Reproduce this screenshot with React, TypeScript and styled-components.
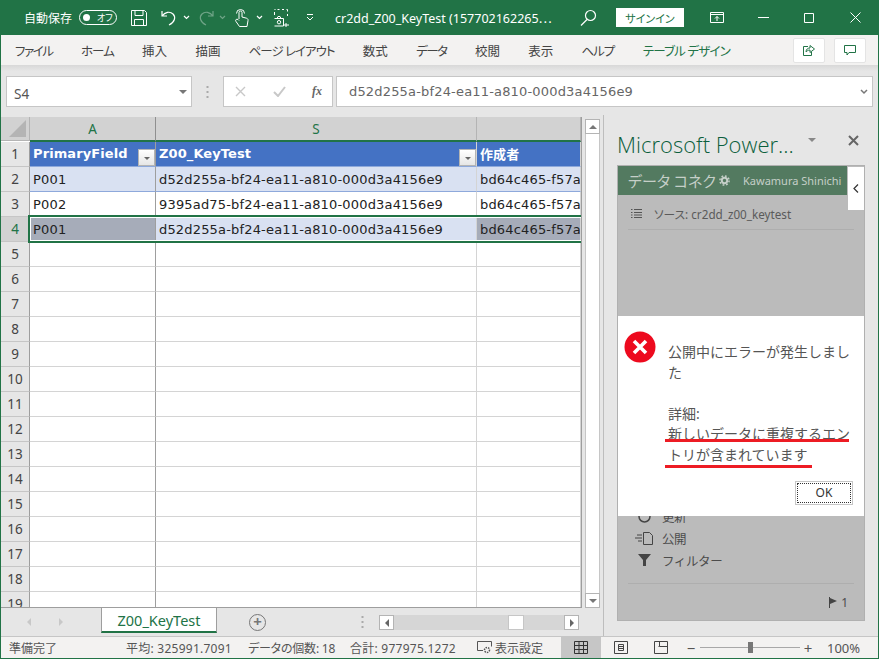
import { FC } from 'react';
import styled, { createGlobalStyle } from 'styled-components';

const UI_FONT = `"Noto Sans", "Noto Sans CJK JP", sans-serif`;
const CELL_FONT = `"DejaVu Sans", "Noto Sans CJK JP", sans-serif`;
const GREEN = '#217346';

const Global = createGlobalStyle`
    html, body { margin: 0; padding: 0; background: #e6e6e6; }
    * { box-sizing: border-box; }
    svg { display: block; flex: none; }
`;

const Window = styled.div`
    width: 879px;
    height: 659px;
    display: flex;
    flex-direction: column;
    overflow: hidden;
    border: solid ${GREEN};
    border-width: 0 1px 1px 1px;
    background: #e6e6e6;
    font-family: ${UI_FONT};
    font-feature-settings: "palt";
    color: #444;
`;

/* title bar */
const TitleBar = styled.div`
    height: 35px;
    margin: 0 -1px;
    flex: none;
    display: flex;
    align-items: center;
    background: ${GREEN};
    color: #fff;
    font-size: 12px;
`;

const Slot = styled.div<{ $w: number; $dim?: boolean }>`
    width: ${p => p.$w}px;
    flex: none;
    display: flex;
    align-items: center;
    justify-content: center;
    opacity: ${p => (p.$dim ? 0.35 : 1)};
`;

const AutoSave = styled.span`
    width: 79px;
    padding-left: 24px;
    flex: none;
    font-size: 12px;
    font-feature-settings: normal;
    white-space: nowrap;
`;

const Toggle = styled.div`
    width: 38px;
    height: 15px;
    flex: none;
    border: 1px solid #fff;
    border-radius: 8px;
    display: flex;
    align-items: center;
    padding-left: 3px;
    gap: 7px;
    font-size: 9px;
    &::before {
        content: '';
        width: 7px;
        height: 7px;
        border-radius: 50%;
        background: #fff;
    }
`;

const DocTitle = styled.span`
    width: 240px;
    flex: none;
    font-size: 12.5px;
    white-space: nowrap;
`;

const SignIn = styled.div`
    width: 68px;
    height: 19px;
    flex: none;
    background: #fff;
    color: ${GREEN};
    font-size: 11px;
    display: flex;
    align-items: center;
    justify-content: center;
`;

/* ribbon tabs */
const Ribbon = styled.div`
    height: 30px;
    flex: none;
    display: flex;
    align-items: center;
    padding: 0 12px 0 14px;
    gap: 28.3px;
    background: #f3f2f1;
    font-size: 12.5px;
    position: relative;
`;

const RibbonTab = styled.span<{ $accent?: boolean; $track?: number }>`
    white-space: nowrap;
    letter-spacing: ${p => p.$track ?? 0}px;
    color: ${p => (p.$accent ? GREEN : '#444')};
`;

const RibbonButtons = styled.div`
    margin-left: auto;
    display: flex;
    gap: 9px;
`;

const RibbonButton = styled.div`
    width: 32px;
    height: 25px;
    background: #fff;
    border: 1px solid #e4e4e4;
    border-radius: 2px;
    display: flex;
    align-items: center;
    justify-content: center;
`;

/* formula bar */
const FormulaBar = styled.div`
    height: 50px;
    flex: none;
    display: flex;
    align-items: flex-start;
    padding: 11px 5px 0 5px;
    background: linear-gradient(#d8d8d8, #e6e6e6 6px);
`;

const InputBox = styled.div<{ $w?: number; $gap?: number }>`
    height: 31px;
    width: ${p => (p.$w ? `${p.$w}px` : 'auto')};
    flex: ${p => (p.$w ? 'none' : '1')};
    margin-left: ${p => p.$gap ?? 0}px;
    padding-right: 4px;
    background: #fff;
    border: 1px solid #c6c6c6;
    display: flex;
    align-items: center;
    justify-content: space-between;
`;

const NameValue = styled.span`
    padding: 4px 0 0 7px;
    font-size: 13.5px;
    color: #555;
`;

const FormulaValue = styled.span`
    padding-left: 12px;
    font-family: ${CELL_FONT};
    font-size: 13px;
    letter-spacing: 0.17px;
    color: #666;
`;

const Caret = styled.i<{ $size?: number; $color?: string }>`
    width: 0;
    height: 0;
    flex: none;
    border-style: solid;
    border-width: ${p => p.$size ?? 4}px ${p => p.$size ?? 4}px 0;
    border-color: ${p => p.$color ?? '#777'} transparent transparent;
`;

const Grip = styled.div`
    width: 31px;
    height: 31px;
    flex: none;
    display: flex;
    align-items: center;
    justify-content: center;
    color: #aaa;
`;

const FxButtons = styled.div`
    display: flex;
    align-items: center;
    width: 100%;
    padding: 0 6px 0 11px;
    justify-content: space-between;
`;

const FxLabel = styled.span`
    font-family: "Liberation Serif", serif;
    font-style: italic;
    font-weight: 700;
    font-size: 12px;
    color: #666;
`;

/* main area */
const Main = styled.div`
    flex: 1;
    min-height: 0;
    display: flex;
`;

const SheetColumn = styled.div`
    width: 602px;
    flex: none;
    display: flex;
    flex-direction: column;
`;

const SheetRow = styled.div`
    height: 493px;
    flex: none;
    display: flex;
    padding-top: 2px;
`;

const Grid = styled.div`
    width: 581px;
    flex: none;
    position: relative;
    overflow: hidden;
    background: #fff;
    border-right: 1px solid #9e9e9e;
    border-bottom: 1px solid #9e9e9e;
    display: grid;
    grid-template-columns: 29px 126px 321px 104px;
    grid-auto-rows: 25px;
    grid-template-rows: 25px;
    align-content: start;
    font-family: ${CELL_FONT};
    font-size: 13px;
    color: #222;
`;

const Corner = styled.div`
    background: #d2d2d2;
    border-right: 1px solid #b4b4b4;
    border-bottom: 1px solid #b4b4b4;
    display: flex;
    align-items: flex-end;
    justify-content: flex-end;
    padding: 0 3px 3px 0;
    height: 24px;
`;

const ColHead = styled.div<{ $edge?: boolean; $sel?: boolean }>`
    height: 25px;
    background: #d2d2d2;
    border-bottom: 2px solid ${GREEN};
    border-right: 1px solid ${p => (p.$edge ? '#8f8f8f' : '#b4b4b4')};
    color: ${p => (p.$sel ? GREEN : '#444')};
    font-family: ${UI_FONT};
    font-size: 13.5px;
    display: flex;
    align-items: center;
    justify-content: center;
`;

const RowHead = styled.div<{ $sel?: boolean }>`
    background: ${p => (p.$sel ? '#d2d2d2' : '#e6e6e6')};
    color: ${p => (p.$sel ? GREEN : '#444')};
    border-right: 1px solid #9e9e9e;
    border-bottom: 1px solid #c6c6c6;
    font-family: ${UI_FONT};
    font-size: 13.5px;
    display: flex;
    align-items: center;
    justify-content: center;
`;

const Cell = styled.div<{ $bg?: string; $line?: string; $edge?: boolean }>`
    background: ${p => p.$bg ?? '#fff'};
    border-bottom: 1px solid ${p => p.$line ?? '#d4d4d4'};
    border-right: 1px solid ${p => (p.$edge ? '#9e9e9e' : '#d4d4d4')};
    padding-left: 3px;
    white-space: nowrap;
    overflow: hidden;
    display: flex;
    align-items: center;
    letter-spacing: 0.17px;
`;

const HeadCell = styled(Cell)`
    color: #fff;
    font-weight: 700;
    font-size: 13px;
    letter-spacing: 0.1px;
    justify-content: space-between;
    align-items: flex-end;
    padding-bottom: 0;
    & > span { align-self: center; padding-bottom: 1px; }
`;

const FilterButton = styled.div`
    width: 17px;
    height: 17px;
    flex: none;
    background: linear-gradient(#fff, #e6e6e6);
    border: 1px solid #b4b4b4;
    display: flex;
    align-items: center;
    justify-content: center;
    padding-top: 2px;
`;

const SelectionFrame = styled.div`
    position: absolute;
    left: 27px;
    right: -4px;
    top: 98px;
    height: 28px;
    border: 2px solid ${GREEN};
    box-shadow: inset 0 0 0 1px #fff;
    pointer-events: none;
`;

const VScroll = styled.div`
    width: 21px;
    flex: none;
    padding: 2px 2px 0 3px;
    display: flex;
    flex-direction: column;
`;

const VTrack = styled.div`
    flex: 1;
    background: #fff;
    border: 1px solid #c6c6c6;
    border-top: none;
    border-bottom: none;
    width: 15px;
`;

const ScrollBtn = styled.div`
    width: 15px;
    height: 15px;
    flex: none;
    background: #fff;
    border: 1px solid #b4b4b4;
    display: flex;
    align-items: center;
    justify-content: center;
`;

const TriUp = styled.i`
    width: 0;
    height: 0;
    border-style: solid;
    border-width: 0 4px 4px;
    border-color: transparent transparent #777;
`;

const TriSide = styled.i<{ $dir: 'l' | 'r'; $color?: string }>`
    width: 0;
    height: 0;
    border-style: solid;
    border-width: 4px 0 4px 4px;
    border-color: transparent transparent transparent ${p => p.$color ?? '#666'};
    transform: ${p => (p.$dir === 'l' ? 'scaleX(-1)' : 'none')};
`;

/* sheet tabs */
const TabBar = styled.div`
    height: 28px;
    flex: none;
    display: flex;
    align-items: flex-start;
`;

const TabNav = styled.div`
    width: 100px;
    flex: none;
    display: flex;
    padding: 10px 38px 0 26px;
    justify-content: space-between;
`;

const SheetTab = styled.div`
    width: 116px;
    height: 25px;
    flex: none;
    background: #fff;
    border: solid #9e9e9e;
    border-width: 0 1px;
    border-bottom: 2px solid ${GREEN};
    color: ${GREEN};
    font-size: 14.5px;
    display: flex;
    align-items: center;
    justify-content: center;
`;

const AddSlot = styled.div`
    width: 79px;
    flex: none;
    padding: 6px 0 0 32px;
`;

const AddCircle = styled.div`
    width: 17px;
    height: 17px;
    border: 1px solid #777;
    border-radius: 50%;
    color: #777;
    font-size: 15px;
    font-weight: 700;
    line-height: 13px;
    text-align: center;
`;

const TabGrip = styled.div`
    width: 83px;
    flex: none;
    padding: 7px 15px 0 0;
    display: flex;
    justify-content: flex-end;
`;

const HScroll = styled.div`
    width: 200px;
    height: 15px;
    margin-top: 7px;
    flex: none;
    background: #d6d6d6;
    display: flex;
    justify-content: space-between;
    position: relative;
`;

const HThumb = styled.div`
    position: absolute;
    left: 129px;
    top: 0;
    width: 16px;
    height: 15px;
    background: #fff;
    border: 1px solid #c6c6c6;
`;

/* add-in pane */
const Pane = styled.div`
    flex: 1;
    min-width: 0;
    border-left: 1px solid #bdbdbd;
    padding: 0 13px 15px 13px;
    display: flex;
    flex-direction: column;
`;

const PaneHead = styled.div`
    height: 50px;
    flex: none;
    display: flex;
    align-items: center;
    padding-top: 8px;
`;

const PaneTitle = styled.span`
    font-family: "Open Sans", sans-serif;
    font-weight: 300;
    font-size: 22px;
    color: #0b5f3c;
    white-space: nowrap;
`;

const PaneTools = styled.div`
    display: flex;
    align-items: center;
    margin-left: 14px;
    margin-bottom: 8px;
    gap: 32px;
`;

const Panel = styled.div`
    flex: 1;
    min-height: 0;
    position: relative;
    background: #bbb;
    border: 1px solid #b0b0b0;
    display: flex;
    flex-direction: column;
`;

const PanelHeader = styled.div`
    height: 29px;
    width: 229px;
    flex: none;
    background: #537a60;
    display: flex;
    align-items: center;
    padding-left: 10px;
    color: #c5cfc8;
    white-space: nowrap;
`;

const PanelTitle = styled.span`
    width: 91px;
    flex: none;
    font-size: 15px;
`;

const PanelUser = styled.span`
    font-size: 11px;
    margin-left: 13px;
`;

const CollapseTab = styled.div`
    position: absolute;
    top: 1px;
    right: 0;
    width: 16px;
    height: 43px;
    background: #fff;
    display: flex;
    align-items: center;
    justify-content: center;
`;

const SourceRow = styled.div`
    margin: 0 10px;
    height: 35px;
    flex: none;
    border-bottom: 1px solid #aeaeae;
    display: flex;
    align-items: center;
    gap: 12px;
    padding: 2px 0 0 3px;
    font-size: 11.7px;
    color: #5a5a5a;
`;

const Actions = styled.div`
    margin-top: auto;
    display: flex;
    flex-direction: column;
`;

const ActionRow = styled.div`
    height: 22px;
    display: flex;
    align-items: center;
    gap: 9px;
    padding-left: 17px;
    font-size: 12.5px;
    font-feature-settings: normal;
    letter-spacing: -0.4px;
    color: #4c4c4c;
`;

const ActionIcon = styled.div`
    width: 18px;
    display: flex;
    justify-content: center;
`;

const FlagRow = styled.div`
    margin: 12px 10px 0;
    height: 37px;
    border-top: 1px solid #aeaeae;
    display: flex;
    align-items: center;
    justify-content: flex-end;
    gap: 2px;
    padding-right: 6px;
    font-size: 12px;
    color: #4c4c4c;
`;

/* error dialog */
const Dialog = styled.div`
    position: absolute;
    left: 0;
    right: 0;
    top: 150px;
    height: 200px;
    background: #fff;
    padding: 26px 11px 0 50px;
    color: #555;
    font-size: 14px;
    font-feature-settings: normal;
    line-height: 20.6px;
`;

const ErrorIcon = styled.div`
    position: absolute;
    left: 6px;
    top: 15px;
`;

const Message = styled.p`
    margin: 0 0 20.6px;
    width: 184px;
`;

const RedLine = styled.i<{ $y: number; $w: number }>`
    position: absolute;
    left: 47px;
    top: ${p => p.$y}px;
    width: ${p => p.$w}px;
    height: 3px;
    background: #ed1c24;
`;

const OkButton = styled.div`
    position: absolute;
    right: 11px;
    top: 165px;
    width: 58px;
    height: 24px;
    border: 1px solid #c6c6c6;
    font-size: 12px;
    color: #333;
    display: flex;
    align-items: center;
    justify-content: center;
    &::after {
        content: '';
        position: absolute;
        inset: 1px;
        border: 1px dotted #333;
    }
`;

/* status bar */
const StatusBar = styled.div`
    height: 22px;
    flex: none;
    display: flex;
    align-items: center;
    background: #f3f2f1;
    border-top: 1px solid #c6c6c6;
    font-size: 12px;
    color: #555;
    padding-left: 8px;
    white-space: nowrap;
`;

const StatusText = styled.span<{ $w: number; $track?: number }>`
    width: ${p => p.$w}px;
    flex: none;
    letter-spacing: ${p => p.$track ?? 0}px;
`;

const ViewButton = styled.div<{ $on?: boolean; $w: number }>`
    width: ${p => p.$w}px;
    height: 21px;
    flex: none;
    display: flex;
    align-items: center;
    justify-content: center;
    background: ${p => (p.$on ? '#c6c6c6' : 'transparent')};
`;

const ZoomTrack = styled.div`
    width: 100px;
    height: 1px;
    flex: none;
    background: #a8a8a8;
    position: relative;
    margin: 0 1px 0 2px;
`;

const ZoomThumb = styled.i`
    position: absolute;
    left: 48px;
    top: -5px;
    width: 5px;
    height: 11px;
    background: #777;
`;

const ZoomSign = styled.span<{ $left?: number }>`
    width: 14px;
    margin-left: ${p => p.$left ?? 0}px;
    flex: none;
    font-size: 15px;
    text-align: center;
`;

const ZoomValue = styled.span`
    margin-left: 12px;
    font-size: 13px;
`;

const Dots: FC = () => (
    <svg width="3" height="14" viewBox="0 0 3 14" fill="#aaa">
        <rect x="0.5" y="1" width="2" height="2" />
        <rect x="0.5" y="6" width="2" height="2" />
        <rect x="0.5" y="11" width="2" height="2" />
    </svg>
);

const Chevron: FC = () => (
    <svg width="7" height="5" viewBox="0 0 7 5" fill="none" stroke="#fff" strokeWidth="1.2">
        <path d="M1 1l2.5 2.5L6 1" />
    </svg>
);

const KEY_A = 'd52d255a-bf24-ea11-a810-000d3a4156e9';
const KEY_B = '9395ad75-bf24-ea11-a810-000d3a4156e9';
const OWNER = 'bd64c465-f57a';

const TABS = [
    { label: 'ファイル', track: -1.4 },
    { label: 'ホーム', track: -1 },
    { label: '挿入' },
    { label: '描画' },
    { label: 'ページ レイアウト', track: -1 },
    { label: '数式' },
    { label: 'データ', track: -1.5 },
    { label: '校閲' },
    { label: '表示' },
    { label: 'ヘルプ', track: -1 },
    { label: 'テーブル デザイン', track: -0.8, accent: true },
];

const ROWS = [
    { id: 'P001', key: KEY_A, bg: '#d9e1f2', line: '#8ea9db' },
    { id: 'P002', key: KEY_B, bg: '#fff', line: '#8ea9db' },
    { id: 'P001', key: KEY_A, bg: '#d9e1f2', line: '#8ea9db', selected: true },
];

const EMPTY_ROWS = Array.from({ length: 15 }, (_, i) => i + 5);

const App: FC = () => (
    <Window>
        <Global />
        <TitleBar>
            <AutoSave>自動保存</AutoSave>
            <Toggle>オフ</Toggle>
            <Slot $w={44}>
                <svg width="16" height="16" viewBox="0 0 16 16" fill="none" stroke="#fff" strokeWidth="1">
                    <path d="M.5.5h13l2 2v13H.5zM4 .5v5h8v-5M3.5 15.5v-6h9v6" />
                </svg>
            </Slot>
            <Slot $w={16}>
                <svg width="16" height="16" viewBox="0 0 16 16" fill="none" stroke="#fff" strokeWidth="1.2">
                    <path d="M1 1v5h5M1 6c3-4 8-5 11-2s2 8-4 11" />
                </svg>
            </Slot>
            <Slot $w={18}><Chevron /></Slot>
            <Slot $w={22} $dim>
                <svg width="16" height="16" viewBox="0 0 16 16" fill="none" stroke="#fff" strokeWidth="1.2">
                    <path d="M15 1v5h-5M15 6c-3-4-8-5-11-2s-2 8 4 11" />
                </svg>
            </Slot>
            <Slot $w={10} $dim><Chevron /></Slot>
            <Slot $w={28}>
                <svg width="15" height="19" viewBox="0 0 15 19" fill="none" stroke="#fff" strokeWidth="1">
                    <path d="M5 11V4.500a1.500 1.500 0 0 1 3 0V9l4.500 1.200c1.200.4 1.800 1.200 1.500 2.400l-1 5.900H5.500L2 13.500c-.8-1-.2-2.300 1-2.300.8 0 1.400.5 2 1.300" />
                    <path d="M2.500 5.500a4 4 0 1 1 8 0" />
                </svg>
            </Slot>
            <Slot $w={8}><Chevron /></Slot>
            <Slot $w={38}>
                <svg width="16" height="18" viewBox="0 0 16 18" fill="none" stroke="#fff" strokeWidth="1">
                    <path d="M3.500.5h2M8 .5h2M12.500.5h1v2M13.500 5v2M.5 6V3M.5.5h1M.5 17h9M.5 9.500h9V17M3 9.500l1-2h2l1 2M12 14v4M10 16h5" />
                    <circle cx="5" cy="13.200" r="1.700" />
                </svg>
            </Slot>
            <Slot $w={18}>
                <svg width="8" height="7" viewBox="0 0 8 7" fill="none" stroke="#fff" strokeWidth="1">
                    <path d="M1 .5h6M1 3l3 3 3-3" />
                </svg>
            </Slot>
            <Slot $w={16} />
            <DocTitle>cr2dd_Z00_KeyTest (157702162265⋯</DocTitle>
            <Slot $w={26}>
                <svg width="17" height="17" viewBox="0 0 17 17" fill="none" stroke="#fff" strokeWidth="1.2">
                    <circle cx="10.500" cy="6.500" r="5" />
                    <path d="M7 10.500L1 16.500" />
                </svg>
            </Slot>
            <Slot $w={15} />
            <SignIn>サインイン</SignIn>
            <Slot $w={26} />
            <Slot $w={14}>
                <svg width="14" height="11" viewBox="0 0 14 11" fill="none" stroke="#fff" strokeWidth="1">
                    <path d="M.5.500h13v10H.5zM.5 2.500h13M7 9V4.500M5 6.500l2-2 2 2" />
                </svg>
            </Slot>
            <Slot $w={34} />
            <Slot $w={11}>
                <svg width="11" height="1" viewBox="0 0 11 1"><path d="M0 .5h11" stroke="#fff" /></svg>
            </Slot>
            <Slot $w={35} />
            <Slot $w={10}>
                <svg width="10" height="10" viewBox="0 0 10 10" fill="none" stroke="#fff"><path d="M.5.500h9v9h-9z" /></svg>
            </Slot>
            <Slot $w={36} />
            <Slot $w={11}>
                <svg width="11" height="11" viewBox="0 0 11 11" fill="none" stroke="#fff"><path d="M.5.500l10 10M10.500.500l-10 10" /></svg>
            </Slot>
        </TitleBar>

        <Ribbon>
            {TABS.map(tab => (
                <RibbonTab key={tab.label} $accent={tab.accent} $track={tab.track}>{tab.label}</RibbonTab>
            ))}
            <RibbonButtons>
                <RibbonButton>
                    <svg width="12" height="12" viewBox="0 0 12 12" fill="none" stroke={GREEN}>
                        <path d="M5 2.500H.5v9h8V8M3 8c0-3 2-4 4-4V1.500L11.500 5 7 8.500V6C5 6 4 7 3 8z" />
                    </svg>
                </RibbonButton>
                <RibbonButton>
                    <svg width="12" height="11" viewBox="0 0 12 11" fill="none" stroke={GREEN}>
                        <path d="M.5.500h11v7H5L3 10V7.500H.5z" />
                    </svg>
                </RibbonButton>
            </RibbonButtons>
        </Ribbon>

        <FormulaBar>
            <InputBox $w={186}>
                <NameValue>S4</NameValue>
                <Caret />
            </InputBox>
            <Grip><Dots /></Grip>
            <InputBox $w={110}>
                <FxButtons>
                    <svg width="11" height="11" viewBox="0 0 11 11" fill="none" stroke="#c8c8c8" strokeWidth="1.400">
                        <path d="M1 1l9 9M10 1l-9 9" />
                    </svg>
                    <svg width="13" height="11" viewBox="0 0 13 11" fill="none" stroke="#c8c8c8" strokeWidth="2">
                        <path d="M1 6l4 4 7-9" />
                    </svg>
                    <FxLabel>fx</FxLabel>
                </FxButtons>
            </InputBox>
            <InputBox $gap={3}>
                <FormulaValue>{KEY_A}</FormulaValue>
                <svg width="8" height="6" viewBox="0 0 8 6" fill="none" stroke="#777" strokeWidth="1.500">
                    <path d="M1 1l3 3 3-3" />
                </svg>
            </InputBox>
        </FormulaBar>

        <Main>
            <SheetColumn>
                <SheetRow>
                    <Grid>
                        <Corner>
                            <svg width="17" height="17" viewBox="0 0 17 17"><path d="M17 0v17H0z" fill="#b4b4b4" /></svg>
                        </Corner>
                        <ColHead $sel $edge>A</ColHead>
                        <ColHead $sel>S</ColHead>
                        <ColHead />

                        <RowHead>1</RowHead>
                        <HeadCell $bg="#4472c4" $line="#8ea9db" $edge>
                            <span>PrimaryField</span>
                            <FilterButton><Caret $size={3.5} $color="#666" /></FilterButton>
                        </HeadCell>
                        <HeadCell $bg="#4472c4" $line="#8ea9db">
                            <span>Z00_KeyTest</span>
                            <FilterButton><Caret $size={3.5} $color="#666" /></FilterButton>
                        </HeadCell>
                        <HeadCell $bg="#4472c4" $line="#8ea9db"><span>作成者</span></HeadCell>

                        {ROWS.map((row, i) => [
                            <RowHead key={`h${i}`} $sel={row.selected}>{i + 2}</RowHead>,
                            <Cell key={`a${i}`} $bg={row.selected ? '#a6acb9' : row.bg} $line={row.line} $edge>{row.id}</Cell>,
                            <Cell key={`s${i}`} $bg={row.bg} $line={row.line}>{row.key}</Cell>,
                            <Cell key={`o${i}`} $bg={row.selected ? '#a6acb9' : row.bg} $line={row.line}>{OWNER}</Cell>,
                        ])}

                        {EMPTY_ROWS.map(n => [
                            <RowHead key={`h${n}`}>{n}</RowHead>,
                            <Cell key={`a${n}`} $edge />,
                            <Cell key={`s${n}`} />,
                            <Cell key={`o${n}`} />,
                        ])}
                        <SelectionFrame />
                    </Grid>
                    <VScroll>
                        <ScrollBtn><TriUp /></ScrollBtn>
                        <VTrack />
                        <ScrollBtn><Caret /></ScrollBtn>
                    </VScroll>
                </SheetRow>
                <TabBar>
                    <TabNav>
                        <TriSide $dir="l" $color="#c8c8c8" />
                        <TriSide $dir="r" $color="#c8c8c8" />
                    </TabNav>
                    <SheetTab>Z00_KeyTest</SheetTab>
                    <AddSlot><AddCircle>+</AddCircle></AddSlot>
                    <TabGrip><Dots /></TabGrip>
                    <HScroll>
                        <ScrollBtn><TriSide $dir="l" /></ScrollBtn>
                        <HThumb />
                        <ScrollBtn><TriSide $dir="r" /></ScrollBtn>
                    </HScroll>
                </TabBar>
            </SheetColumn>

            <Pane>
                <PaneHead>
                    <PaneTitle>Microsoft Power...</PaneTitle>
                    <PaneTools>
                        <Caret $size={4.5} $color="#888" />
                        <svg width="11" height="11" viewBox="0 0 11 11" fill="none" stroke="#666" strokeWidth="2">
                            <path d="M1 1l9 9M10 1l-9 9" />
                        </svg>
                    </PaneTools>
                </PaneHead>
                <Panel>
                    <PanelHeader>
                        <PanelTitle>データ コネク</PanelTitle>
                        <svg width="11" height="11" viewBox="0 0 11 11" fill="none" stroke="#c5cfc8">
                            <circle cx="5.500" cy="5.500" r="2.700" strokeWidth="2" />
                            <circle cx="5.500" cy="5.500" r="4.600" strokeWidth="1.500" strokeDasharray="1.800 1.800" />
                        </svg>
                        <PanelUser>Kawamura Shinichi</PanelUser>
                    </PanelHeader>
                    <CollapseTab>
                        <svg width="6" height="9" viewBox="0 0 6 9" fill="none" stroke="#333" strokeWidth="1.200">
                            <path d="M5 .5l-4 4 4 4" />
                        </svg>
                    </CollapseTab>
                    <SourceRow>
                        <svg width="11" height="9" viewBox="0 0 11 9" fill="none" stroke="#555">
                            <path d="M0 .5h1.500M3 .5h8M0 3.500h1.500M3 3.500h8M0 6h1.500M3 6h8M0 8.500h1.500M3 8.500h8" />
                        </svg>
                        <span>ソース: cr2dd_z00_keytest</span>
                    </SourceRow>
                    <Actions>
                        <ActionRow>
                            <ActionIcon>
                                <svg width="13" height="13" viewBox="0 0 13 13" fill="none" stroke="#444" strokeWidth="1.500">
                                    <circle cx="6.500" cy="6.500" r="5.500" />
                                </svg>
                            </ActionIcon>
                            更新
                        </ActionRow>
                        <ActionRow>
                            <ActionIcon>
                                <svg width="18" height="13" viewBox="0 0 18 13" fill="none" stroke="#444">
                                    <path d="M8.500.5h6l3 3v9h-9zM2 3h5M0 6h7M3 9h4" />
                                </svg>
                            </ActionIcon>
                            公開
                        </ActionRow>
                        <ActionRow>
                            <ActionIcon>
                                <svg width="13" height="12" viewBox="0 0 13 12" fill="#444">
                                    <path d="M0 0h13L8 6v6H5V6z" />
                                </svg>
                            </ActionIcon>
                            フィルター
                        </ActionRow>
                        <FlagRow>
                            <svg width="10" height="11" viewBox="0 0 10 11" fill="#444">
                                <path d="M0 0h1v11H0zM1 1l7 3-7 3z" />
                            </svg>
                            1
                        </FlagRow>
                    </Actions>
                    <Dialog>
                        <ErrorIcon>
                            <svg width="32" height="32" viewBox="0 0 32 32">
                                <circle cx="16" cy="16" r="15.500" fill="#ed0a1e" />
                                <path d="M10 10l12 12M22 10L10 22" stroke="#fff" strokeWidth="3.600" />
                            </svg>
                        </ErrorIcon>
                        <Message>公開中にエラーが発生しました</Message>
                        <Message>詳細:<br />新しいデータに重複するエントリが含まれています</Message>
                        <RedLine $y={123} $w={184} />
                        <RedLine $y={149} $w={147} />
                        <OkButton>OK</OkButton>
                    </Dialog>
                </Panel>
            </Pane>
        </Main>

        <StatusBar>
            <StatusText $w={117}>準備完了</StatusText>
            <StatusText $w={122} $track={0.25}>平均: 325991.7091</StatusText>
            <StatusText $w={102} $track={-0.2}>データの個数: 18</StatusText>
            <StatusText $w={127} $track={0.25}>合計: 977975.1272</StatusText>
            <svg width="15" height="13" viewBox="0 0 15 13" fill="none" stroke="#555">
                <path d="M6 9.500H.5v-9h14v5" />
                <circle cx="10" cy="9" r="2.500" strokeWidth="1.500" strokeDasharray="1.500 1" />
            </svg>
            <StatusText $w={69}>&nbsp;表示設定</StatusText>
            <ViewButton $on $w={40}>
                <svg width="14" height="13" viewBox="0 0 14 13" fill="none" stroke="#333">
                    <path d="M.5.500h13v12H.5zM.5 4.500h13M.5 8.500h13M5 .5v12M9.500.5v12" />
                </svg>
            </ViewButton>
            <ViewButton $w={40}>
                <svg width="14" height="13" viewBox="0 0 14 13" fill="none" stroke="#444">
                    <path d="M.5.500h13v12H.5zM4.500 3.500h5v6h-5zM4.500 5.500h5M4.500 7.500h5" />
                </svg>
            </ViewButton>
            <ViewButton $w={40}>
                <svg width="14" height="13" viewBox="0 0 14 13" fill="none" stroke="#444">
                    <path d="M.5.500h13v12H.5zM5.500.500v5h8M5.500 5.500h-1" />
                </svg>
            </ViewButton>
            <ZoomSign $left={3}>−</ZoomSign>
            <ZoomTrack><ZoomThumb /></ZoomTrack>
            <ZoomSign>+</ZoomSign>
            <ZoomValue>100%</ZoomValue>
        </StatusBar>
    </Window>
);

export default App;
